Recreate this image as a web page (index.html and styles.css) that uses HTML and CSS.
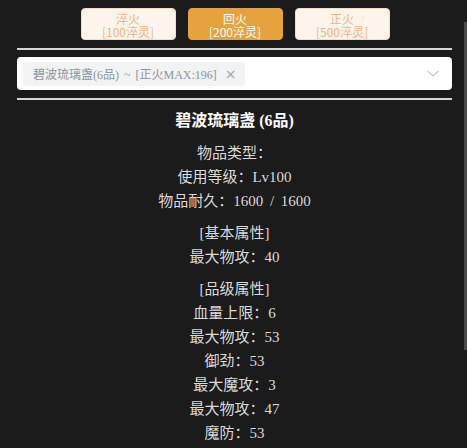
FILE: index.html
```html
<!DOCTYPE html>
<html lang="zh-CN">
<head>
<meta charset="utf-8">
<link rel="stylesheet" href="styles.css">
</head>
<body>
<div class="wrap">
  <div class="btns">
    <button class="btn"><span class="bl">淬火</span><span class="bl">[100淬灵]</span></button>
    <button class="btn active"><span class="bl">回火</span><span class="bl">[200淬灵]</span></button>
    <button class="btn"><span class="bl">正火</span><span class="bl">[500淬灵]</span></button>
  </div>
  <div class="rule"></div>
  <div class="select">
    <span class="tag"><span class="tag-text">碧波琉璃盏(6品) ~ [正火MAX:196]</span><span class="tag-close">×</span></span>
    <svg class="chev" width="12" height="7" viewBox="0 0 12 7"><path d="M0.5 0.8 L6 6 L11.5 0.8" fill="none" stroke="#c0c4cc" stroke-width="1.1"/></svg>
  </div>
  <div class="rule rule2"></div>
  <div class="info">
    <div class="title">碧波琉璃盏 (6品)</div>
    <div class="sec">
      <div class="ln">物品类型：</div>
      <div class="ln">使用等级：Lv100</div>
      <div class="ln">物品耐久：1600 / 1600</div>
    </div>
    <div class="sec">
      <div class="ln">[基本属性]</div>
      <div class="ln">最大物攻：40</div>
    </div>
    <div class="sec">
      <div class="ln">[品级属性]</div>
      <div class="ln">血量上限：6</div>
      <div class="ln">最大物攻：53</div>
      <div class="ln">御劲：53</div>
      <div class="ln">最大魔攻：3</div>
      <div class="ln">最大物攻：47</div>
      <div class="ln">魔防：53</div>
    </div>
  </div>
</div>
<div class="thumb"></div>
</body>
</html>
```
FILE: styles.css
```css
html, body {
  margin: 0;
  padding: 0;
  height: 448px;
  overflow: hidden;
  background: #1b1b1b;
}
.wrap {
  padding: 8px 15px 0 17px;
}
.btns {
  display: flex;
  justify-content: center;
  gap: 12px;
  padding-left: 1px;
}
.btn {
  width: 95px;
  height: 32px;
  margin: 0;
  padding: 2px 0 0;
  border: 1px solid #f6dcc2;
  border-radius: 4px;
  background: #fdf5eb;
  color: #ecb48a;
  font-family: "Noto Sans CJK SC", "Noto Sans", sans-serif;
  font-size: 12px;
  line-height: 13px;
  text-align: center;
  display: flex;
  flex-direction: column;
  align-items: center;
  justify-content: center;
}
.bl {
  display: block;
}
.btn.active {
  background: #e6a23c;
  border-color: #e6a23c;
  color: #fff;
}
.rule {
  margin-top: 8px;
  height: 2px;
  background: #d6d6d6;
}
.select {
  margin-top: 7px;
  height: 33px;
  box-sizing: border-box;
  background: #fff;
  border-radius: 4px;
  display: flex;
  align-items: center;
  justify-content: space-between;
  padding: 0 13px 0 6px;
}
.tag {
  display: inline-flex;
  align-items: center;
  height: 24px;
  box-sizing: border-box;
  padding: 0 8px 0 10px;
  background: #f2f3f5;
  border-radius: 4px;
  color: #909399;
  font-family: "Liberation Serif", "Noto Sans CJK SC", serif;
  font-size: 12px;
}
.tag-text {
  white-space: pre;
  word-spacing: 2px;
}
.tag-close {
  margin-left: 8px;
  font-family: "DejaVu Sans", sans-serif;
  font-size: 14px;
  color: #a0a3a8;
}
.rule2 {
  margin-top: 8px;
}
.info {
  text-align: center;
  color: #dadada;
  font-family: "Liberation Serif", "Noto Sans CJK SC", serif;
  font-size: 15px;
  line-height: 24px;
}
.ln {
  white-space: pre;
  word-spacing: 3px;
}
.title {
  margin-top: 9px;
  color: #fff;
  font-weight: bold;
  font-size: 16px;
  white-space: pre;
}
.sec {
  margin-top: 8px;
}
.thumb {
  position: fixed;
  right: 0;
  top: 22px;
  width: 3px;
  height: 328px;
  background: #4a4a4a;
}
```
